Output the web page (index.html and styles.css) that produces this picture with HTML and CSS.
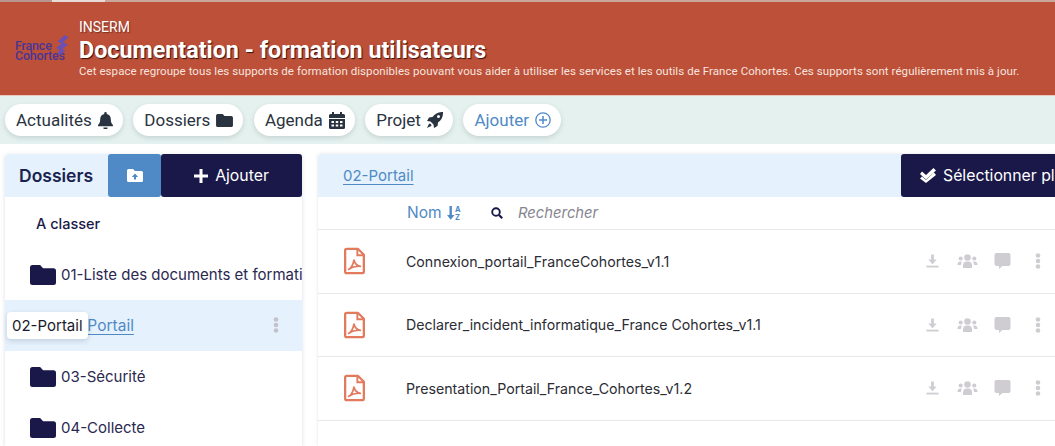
FILE: index.html
```html
<!DOCTYPE html>
<html lang="fr">
<head>
<meta charset="utf-8">
<title>Documentation - formation utilisateurs</title>
<link rel="stylesheet" href="styles.css">
</head>
<body>
<svg width="0" height="0" class="defs">
  <symbol id="folder" viewBox="0 0 26 20"><path d="M2.500 0h7.600l3 3.200h10.400A2.500 2.500 0 0 1 26 5.700v11.800a2.500 2.500 0 0 1-2.500 2.500h-21A2.500 2.500 0 0 1 0 17.500v-15A2.500 2.500 0 0 1 2.500 0z" fill="currentColor"/></symbol>
  <symbol id="dots" viewBox="0 0 6 16"><circle cx="3" cy="2.500" r="2.300" fill="currentColor"/><circle cx="3" cy="8" r="2.300" fill="currentColor"/><circle cx="3" cy="13.500" r="2.300" fill="currentColor"/></symbol>
  <symbol id="pdf" viewBox="0 0 22 28"><path d="M3 1.200h11.500L20.800 7.500V25a1.800 1.800 0 0 1-1.800 1.800H3A1.800 1.800 0 0 1 1.200 25V3A1.800 1.800 0 0 1 3 1.200z" fill="none" stroke="currentColor" stroke-width="2.400" stroke-linejoin="round"/><path d="M14 1.500V8h6.500" fill="none" stroke="currentColor" stroke-width="2"/><path d="M4.800 22.800c2.800-1.600 4.800-5.300 5.600-9.800.9 3.800 2.900 5.800 6.700 6.600-4-.4-8.700.8-12.300 3.200z" fill="none" stroke="currentColor" stroke-width="1.800" stroke-linejoin="round"/></symbol>
  <symbol id="download" viewBox="0 0 14 14"><path d="M5.500 0h3v5.500h3L7 10.500 2.500 5.500h3z" fill="currentColor"/><rect x="0.500" y="12" width="13" height="2" fill="currentColor"/></symbol>
  <symbol id="users" viewBox="0 0 20 14"><circle cx="10" cy="3.500" r="3.300" fill="currentColor"/><path d="M5.500 14v-2.500C5.500 9 7 7.500 9 7.500h2c2 0 3.500 1.500 3.500 4V14z" fill="currentColor"/><circle cx="3.200" cy="4.500" r="2.100" fill="currentColor"/><circle cx="16.800" cy="4.500" r="2.100" fill="currentColor"/><path d="M0 10.500C0 8.500 1.200 7.500 3 7.500c.6 0 1 .1 1.400.4-.7.8-1 1.900-1 3.100H0zM20 10.500c0-2-1.200-3-3-3-.6 0-1 .1-1.400.4.700.8 1 1.900 1 3.100H20z" fill="currentColor"/></symbol>
  <symbol id="comment" viewBox="0 0 16 16"><path d="M2 0h12a2 2 0 0 1 2 2v9a2 2 0 0 1-2 2H8l-3.500 3v-3H2a2 2 0 0 1-2-2V2a2 2 0 0 1 2-2z" fill="currentColor"/></symbol>
</svg>

<div class="topstrip"></div>
<header class="banner">
  <div class="logo">
    <span class="logo-word">France<br>Cohortes</span>
    <svg class="logo-mark" viewBox="0 0 15 20" width="15" height="20"><path d="M11 0 14.500 2.500 9 7l5 2.500L8.500 14l3 2-6 4-2-2.500 2.500-2L2 13l5.500-4.500L3.500 6.500z" fill="#6b4fb5"/></svg>
  </div>
  <div class="banner-text">
    <div class="org">INSERM</div>
    <h1 class="title">Documentation - formation utilisateurs</h1>
    <p class="lede">Cet espace regroupe tous les supports de formation disponibles pouvant vous aider à utiliser les services et les outils de France Cohortes. Ces supports sont régulièrement mis à jour.</p>
  </div>
</header>

<nav class="tabs">
  <a class="pill">Actualités
    <svg viewBox="0 0 14 16" width="15" height="17"><path d="M7 0a1.200 1.200 0 0 1 1.200 1.200v.6C10.700 2.300 12 4.300 12 6.800c0 3.200 1 4.400 2 5.400v1.300H0v-1.300c1-1 2-2.200 2-5.400 0-2.500 1.300-4.500 3.800-5v-.6A1.200 1.200 0 0 1 7 0zM5 14.500h4a2 2 0 0 1-4 0z" fill="currentColor"/></svg>
  </a>
  <a class="pill">Dossiers
    <svg width="17" height="13"><use href="#folder"/></svg>
  </a>
  <a class="pill">Agenda
    <svg viewBox="0 0 16 17" width="16" height="17"><path d="M3 0h2v2h6V0h2v2h1.500A1.500 1.500 0 0 1 16 3.500V6H0V3.500A1.500 1.500 0 0 1 1.500 2H3zM0 7h16v8.500a1.500 1.500 0 0 1-1.500 1.500h-13A1.500 1.500 0 0 1 0 15.500zm2.500 2v2h2.500V9zm4.250 0v2h2.500V9zM11 9v2h2.500V9zm-8.500 3.500v2h2.500v-2zm4.250 0v2h2.500v-2zm4.250 0v2h2.500v-2z" fill="currentColor" fill-rule="evenodd"/></svg>
  </a>
  <a class="pill">Projet
    <svg viewBox="0 0 16 16" width="16" height="16"><path d="M16 0c.2 4.500-1.500 8-5 10.500l-.5 3.500-3.500 2-.5-3.500-3-3L0 9l2-3.500 3.500-.5C8 1.500 11.500-.2 16 0zm-4.500 3a1.500 1.500 0 1 0 0 3 1.500 1.500 0 0 0 0-3zM2.500 11.500c1 0 2 1 2 2-.8 1-2.500 1.500-4.500 2.500 1-2 1.500-3.700 2.500-4.500z" fill="currentColor" fill-rule="evenodd"/></svg>
  </a>
  <a class="pill pill-add">Ajouter
    <svg viewBox="0 0 16 16" width="16" height="16"><circle cx="8" cy="8" r="7.200" fill="none" stroke="currentColor" stroke-width="1.300"/><path d="M8 4v8M4 8h8" stroke="currentColor" stroke-width="1.500"/></svg>
  </a>
</nav>

<main class="workspace">
  <section class="folders">
    <div class="folders-head">
      <h2 class="folders-title">Dossiers</h2>
      <button class="btn btn-upload">
        <svg viewBox="0 0 16 13" width="16" height="13"><path d="M1.500 0h4.500l2 2h6.500A1.500 1.500 0 0 1 16 3.500v8a1.500 1.500 0 0 1-1.500 1.500h-13A1.500 1.500 0 0 1 0 11.500v-10A1.500 1.500 0 0 1 1.500 0zM8 4.500 4.800 8H7v2.500h2V8h2.200z" fill="currentColor" fill-rule="evenodd"/></svg>
      </button>
      <button class="btn btn-add">
        <svg viewBox="0 0 14 14" width="14" height="14"><path d="M5.500 0h3v5.500H14v3H8.500V14h-3V8.500H0v-3h5.500z" fill="currentColor"/></svg>
        <span>Ajouter</span>
      </button>
    </div>
    <div class="folder-list">
      <div class="folder-row folder-root">A classer</div>
      <div class="folder-row"><svg class="folder-icon"><use href="#folder"/></svg><span class="folder-name">01-Liste des documents et formations</span></div>
      <div class="folder-row is-active">
        <svg class="folder-icon"><use href="#folder"/></svg><a class="folder-name folder-link">02-Portail</a>
        <svg class="folder-dots" width="6" height="16"><use href="#dots"/></svg>
        <span class="tooltip">02-Portail</span>
      </div>
      <div class="folder-row"><svg class="folder-icon"><use href="#folder"/></svg><span class="folder-name">03-Sécurité</span></div>
      <div class="folder-row"><svg class="folder-icon"><use href="#folder"/></svg><span class="folder-name">04-Collecte</span></div>
    </div>
  </section>

  <section class="docs">
    <div class="docs-head">
      <a class="crumb">02-Portail</a>
      <button class="btn btn-select">
        <svg viewBox="0 0 16 15" width="16" height="15"><path d="M2 3.500 6 7l7.500-7L16 2.500 6 11.500 0 6zM2 8.500 6 12l8-7.500L16 7 6 15 0 10.500z" fill="currentColor"/></svg>
        <span>Sélectionner plusieurs</span>
      </button>
    </div>
    <div class="docs-tools">
      <span class="sort">Nom
        <svg viewBox="0 0 15 15" width="15" height="15"><path d="M2.500 1h2.400v9h2.600L3.700 14.800 0 10h2.500z" fill="currentColor"/><text x="8" y="6.500" class="sort-a">A</text><text x="8" y="14.500" class="sort-a">Z</text></svg>
      </span>
      <svg class="search-icon" viewBox="0 0 12 12" width="12" height="12"><circle cx="5" cy="5" r="3.800" fill="none" stroke="currentColor" stroke-width="1.900"/><path d="M8 8l3.200 3.200" stroke="currentColor" stroke-width="2.200"/></svg>
      <span class="search">Rechercher</span>
    </div>
    <div class="doc-row">
      <svg class="pdf" width="21" height="28"><use href="#pdf"/></svg>
      <span class="doc-name">Connexion_portail_FranceCohortes_v1.1</span>
      <div class="doc-actions">
        <svg class="act-dl" width="13" height="14"><use href="#download"/></svg><svg width="21" height="14"><use href="#users"/></svg><svg class="act-comment" width="17" height="16"><use href="#comment"/></svg><svg width="6" height="16"><use href="#dots"/></svg>
      </div>
    </div>
    <div class="doc-row">
      <svg class="pdf" width="21" height="28"><use href="#pdf"/></svg>
      <span class="doc-name">Declarer_incident_informatique_France Cohortes_v1.1</span>
      <div class="doc-actions">
        <svg class="act-dl" width="13" height="14"><use href="#download"/></svg><svg width="21" height="14"><use href="#users"/></svg><svg class="act-comment" width="17" height="16"><use href="#comment"/></svg><svg width="6" height="16"><use href="#dots"/></svg>
      </div>
    </div>
    <div class="doc-row">
      <svg class="pdf" width="21" height="28"><use href="#pdf"/></svg>
      <span class="doc-name">Presentation_Portail_France_Cohortes_v1.2</span>
      <div class="doc-actions">
        <svg class="act-dl" width="13" height="14"><use href="#download"/></svg><svg width="21" height="14"><use href="#users"/></svg><svg class="act-comment" width="17" height="16"><use href="#comment"/></svg><svg width="6" height="16"><use href="#dots"/></svg>
      </div>
    </div>
  </section>
</main>
</body>
</html>
```
FILE: styles.css
```css
* { box-sizing: border-box; }
html, body { margin: 0; padding: 0; }
body {
  width: 1055px;
  height: 446px;
  overflow: hidden;
  background: #fff;
  font-family: "Inter", sans-serif;
  color: #1a1848;
}
.defs { position: absolute; }
.topstrip {
  height: 2px;
  background: linear-gradient(90deg, #b9968d 0 52px, #e9dcd8 52px 105px, #c9a79d 105px);
}
.banner {
  height: 94px;
  border-bottom: 1px solid #e8c8bf;
  background: #bc5039;
  display: flex;
  align-items: center;
  padding-left: 15px;
}
.logo { width: 64px; height: 28px; display: flex; align-items: flex-start; flex: none; }
.logo-word {
  font: 500 12.500px/10px "Roboto", sans-serif;
  color: #4a3596;
  letter-spacing: -0.2px;
  margin-top: 6px;
}
.logo-mark { margin-left: -11px; flex: none; }
.banner-text { color: #fff; font-family: "Roboto", sans-serif; margin-top: -2px; }
.org { font-size: 14px; line-height: 18px; text-shadow: 1px 1px 1px rgba(60,20,10,.5); }
.title {
  margin: 0;
  font-size: 23.300px;
  line-height: 28px;
  font-weight: 700;
  text-shadow: 1px 1px 1px rgba(40,10,5,.9);
}
.lede { margin: 0; font-size: 11.500px; line-height: 14px; color: #f7e4df; letter-spacing: 0.065px; }
.tabs {
  height: 48px;
  background: #e4f1ef;
  display: flex;
  align-items: center;
  gap: 10.500px;
  padding: 0 5px;
}
.pill {
  height: 32px;
  padding: 0 10px 0 11px;
  border-radius: 16px;
  background: #fff;
  box-shadow: 0 2px 5px rgba(60,80,80,.18);
  display: flex;
  align-items: center;
  gap: 6px;
  font: 17px "Roboto", sans-serif;
  color: #2a3340;
}
.pill-add { color: #4f8ac6; }
.workspace {
  display: flex;
  gap: 16px;
  padding: 10px 0 0 5px;
  height: 302px;
  overflow: hidden;
}
.folders {
  width: 297px;
  flex: none;
  box-shadow: 0 1px 4px rgba(60,70,110,.18);
}
.folders-head {
  height: 43px;
  background: #e5f1fc;
  display: flex;
  border-radius: 4px 4px 0 0;
}
.folders-title {
  margin: 0;
  width: 103px;
  padding-left: 14px;
  font-size: 17.500px;
  font-weight: 600;
  line-height: 43px;
  color: #1a2350;
}
.btn {
  border: 0;
  padding: 0;
  font-family: "Inter", sans-serif;
  color: #fff;
  display: flex;
  align-items: center;
  justify-content: center;
  border-radius: 3px;
}
.btn svg { flex: none; }
.btn-upload { width: 53px; background: #4f8ac6; }
.btn-add { flex: 1; background: #1a1848; font-size: 15.800px; gap: 7px; }
.folder-list { padding-top: 1px; }
.folder-row {
  position: relative;
  height: 51px;
  display: flex;
  align-items: center;
  padding-left: 25px;
  font-size: 15px;
  white-space: nowrap;
  overflow: hidden;
  color: #2a2850;
}
.folder-row.is-active { background: #e5f1fc; overflow: visible; }
.folder-root { padding-left: 31px; font-weight: 500; color: #1a1848; font-size: 14.500px; }
.folder-icon { width: 26px; height: 20px; flex: none; color: #1a1848; margin-right: 5px; }
.folder-name { display: block; }
.folder-link { color: #4f8ac6; font-size: 15.500px; text-decoration: underline; text-underline-offset: 3px; }
.folder-dots { position: absolute; right: 23px; top: 17px; color: #c5c2cc; }
.tooltip {
  position: absolute;
  left: 2px;
  top: 12px;
  height: 27px;
  padding: 0 5px;
  background: #fff;
  border-radius: 4px;
  box-shadow: 0 2px 5px rgba(60,70,110,.2);
  font-size: 15px;
  line-height: 27px;
  color: #1a1a2a;
}
.docs {
  flex: 1;
  min-width: 0;
  box-shadow: 0 0 3px rgba(60,70,110,.15);
}
.docs-head {
  height: 43px;
  background: #e5f1fc;
  display: flex;
  align-items: center;
  justify-content: space-between;
  padding-left: 25px;
  border-radius: 4px 0 0 0;
}
.crumb { color: #4f8ac6; font-size: 15px; text-decoration: underline; text-underline-offset: 3px; }
.btn-select {
  height: 43px;
  width: 154px;
  flex: none;
  justify-content: flex-start;
  padding-left: 19px;
  background: #1a1848;
  gap: 7px;
  font-size: 15.800px;
  white-space: nowrap;
  overflow: hidden;
  border-radius: 3px 0 0 3px;
}
.docs-tools {
  height: 33px;
  display: flex;
  align-items: center;
  padding: 0 0 1px 89px;
  border-bottom: 1px solid #e8e8ec;
}
.sort { color: #4f8ac6; font-size: 15.500px; display: flex; align-items: center; gap: 5px; width: 84px; }
.sort-a { font: 700 7.500px "Inter", sans-serif; fill: currentColor; }
.search-icon { color: #1a1848; margin-right: 15px; }
.search { font-size: 14.800px; font-style: italic; color: #85858f; }
.doc-row {
  height: 63.500px;
  display: flex;
  align-items: center;
  padding-left: 26px;
  border-bottom: 1px solid #e8e8ec;
}
.pdf { color: #e27a5e; flex: none; margin-right: 41px; }
.doc-name { font-size: 14.200px; color: #2c2c34; flex: 1; }
.doc-actions { display: flex; align-items: center; gap: 16px; padding-right: 14px; color: #cfcdd2; }
.act-dl { margin-right: 2px; }
.act-comment { margin-right: 8px; }
```
